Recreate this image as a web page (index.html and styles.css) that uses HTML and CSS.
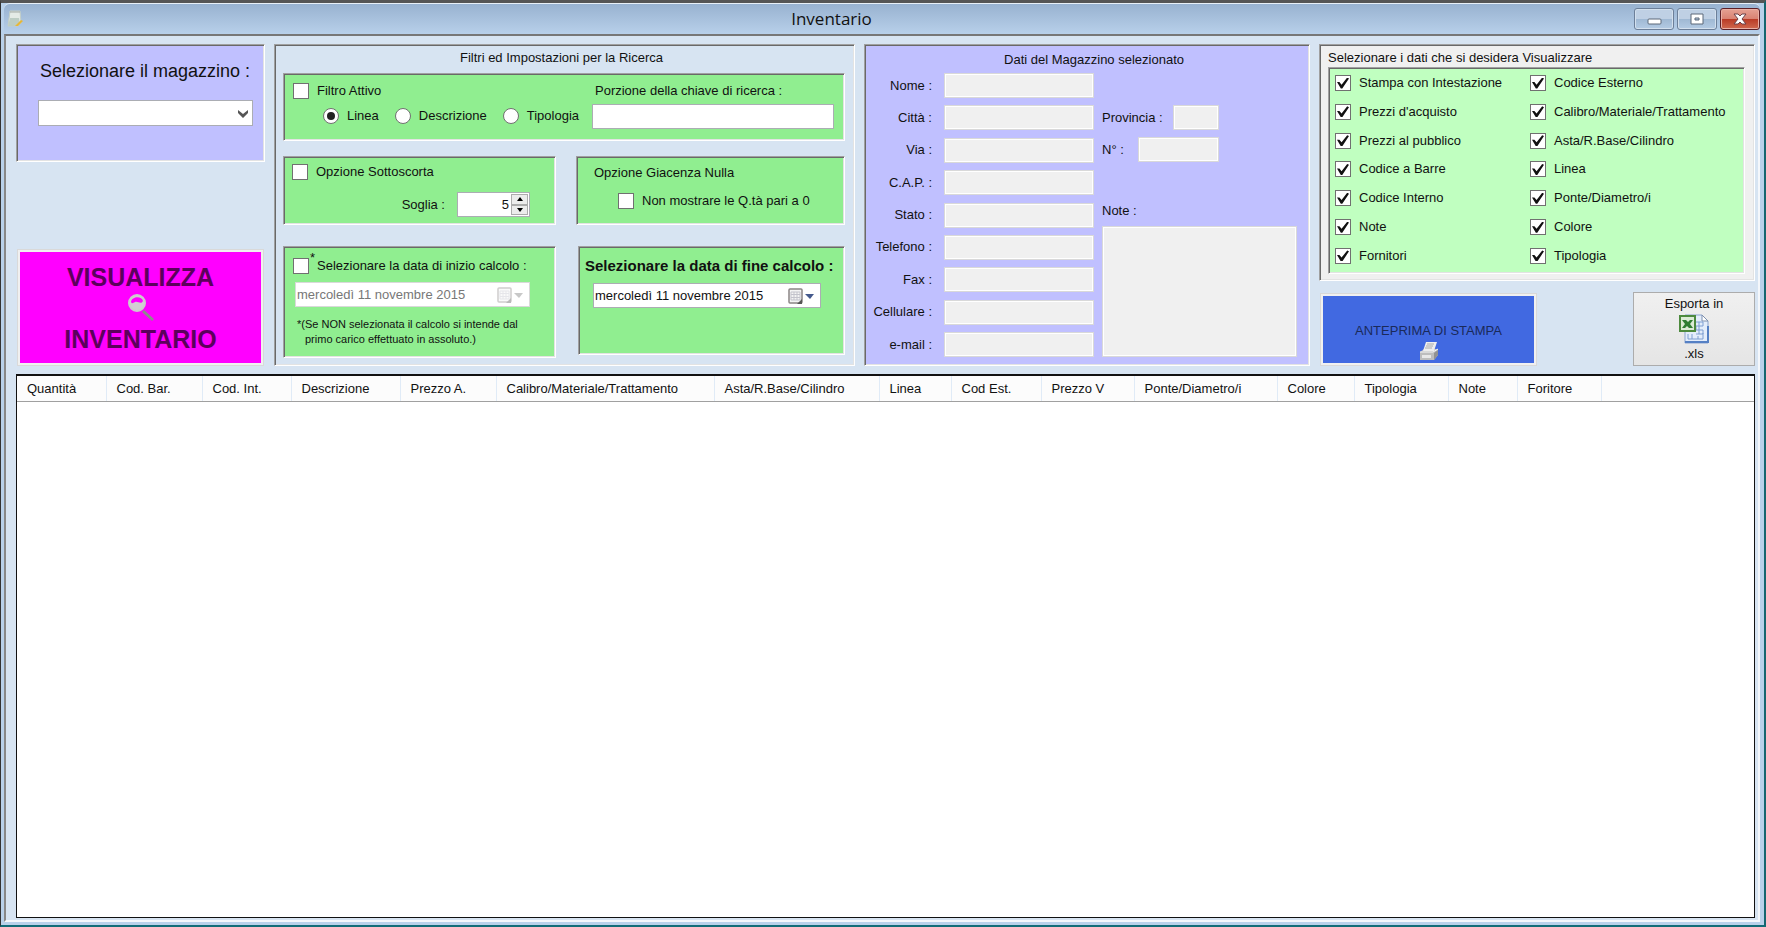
FILE: index.html
```
<!DOCTYPE html>
<html lang="it">
<head>
  <meta charset="UTF-8">
  <meta name="viewport" content="width=device-width, initial-scale=1.0">
  <title>Inventario</title>
  <link rel="stylesheet" href="styles.css">
</head>
<body>
  <div class="window">
    <header class="titlebar">
      <svg class="app-icon" width="16" height="18" viewBox="0 0 16 18">
        <path d="M3 1h10l1 12-3 3H1L2 9z" fill="#e4ebe6" stroke="#c3cfc8"/>
        <path d="M3 8h9l1 6-3 2H1z" fill="#bccdc4"/>
        <path d="M4 1v2M6 1v2M8 1v2M10 1v2M12 1v2" stroke="#a3aaa5"/>
        <path d="M8 16l6-6 2 1-5 5z" fill="#e7b736"/>
      </svg>
      <h1>Inventario</h1>
      <div class="window-buttons">
        <button type="button" aria-label="Riduci a icona">
          <svg width="16" height="16" viewBox="0 0 16 16"><rect x="2" y="8" width="13" height="5" rx="1" fill="#fff" stroke="#5c6878"/></svg>
        </button>
        <button type="button" aria-label="Ingrandisci">
          <svg width="16" height="16" viewBox="0 0 16 16"><path d="M2 3h12v10H2zM6 7v2h4V7z" fill="#fff" fill-rule="evenodd" stroke="#5c6878"/></svg>
        </button>
        <button type="button" class="close" aria-label="Chiudi">
          <svg width="16" height="16" viewBox="0 0 16 16"><path d="M2 3h4l2 2 2-2h4l-4 5 4 5h-4l-2-2-2 2H2l4-5z" fill="#fff" stroke="#6b4048"/></svg>
        </button>
      </div>
    </header>

    <main class="client">
      <div class="top">
        <div class="column">
          <section class="panel warehouse">
            <label for="magazzino">Selezionare il magazzino :</label>
            <div class="combo">
              <select id="magazzino"><option></option></select>
              <svg width="10" height="8" viewBox="0 0 10 8"><path d="M0 0l5 4 5-4v3L5 8 0 3z" fill="#555"/></svg>
            </div>
          </section>
          <button type="button" class="big-button show">
            <span>VISUALIZZA</span>
            <svg width="28" height="28" viewBox="0 0 28 28">
              <path d="M16 17l10 9" stroke="#8c8c8c" stroke-width="3"/>
              <circle cx="10" cy="9" r="8" fill="#d2cdd2" stroke="#ccc" stroke-width="2"/>
              <path d="M4 8c1-6 11-6 12-1-2 4-5 0-8 1-2 1-3 2-4 0z" fill="#f0f"/>
            </svg>
            <span>INVENTARIO</span>
          </button>
        </div>

        <section class="panel filters">
          <h2>Filtri ed Impostazioni per la Ricerca</h2>
          <div class="filter-grid">
            <div class="panel green search">
              <div class="search-by">
                <label><input type="checkbox"> Filtro Attivo</label>
                <div class="radios">
                  <label><input type="radio" name="chiave" checked> Linea</label>
                  <label><input type="radio" name="chiave"> Descrizione</label>
                  <label><input type="radio" name="chiave"> Tipologia</label>
                </div>
              </div>
              <div class="search-key">
                <label for="porzione">Porzione della chiave di ricerca :</label>
                <input type="text" id="porzione">
              </div>
            </div>

            <div class="panel green stock">
              <label><input type="checkbox"> Opzione Sottoscorta</label>
              <div class="threshold">
                <label for="soglia">Soglia :</label>
                <div class="spinner">
                  <input type="number" id="soglia" value="5">
                  <div class="spin-buttons">
                    <button type="button" aria-label="Aumenta"><svg width="6" height="4" viewBox="0 0 6 4"><path d="M0 4l3-4 3 4z"/></svg></button>
                    <button type="button" aria-label="Diminuisci"><svg width="6" height="4" viewBox="0 0 6 4"><path d="M0 0l3 4 3-4z"/></svg></button>
                  </div>
                </div>
              </div>
            </div>

            <div class="panel green zero">
              <p>Opzione Giacenza Nulla</p>
              <label><input type="checkbox"> Non mostrare le Q.tà pari a 0</label>
            </div>

            <div class="panel green start-date">
              <label><input type="checkbox"> Selezionare la data di inizio calcolo :<span class="star">*</span></label>
              <div class="date disabled">
                <input type="text" value="mercoledì 11 novembre 2015" aria-label="Data di inizio calcolo" disabled>
                <button type="button" aria-label="Apri calendario" disabled>
                  <svg width="26" height="16" viewBox="0 0 26 16">
                    <rect x="1" y="1" width="13" height="14" rx="1" fill="#f4f4f4" stroke="#8a8585" stroke-width="1.5"/>
                    <path d="M3 4h9v8H3zM3 6.500h9M3 9.500h9M6 4v8M9 4v8" fill="none" stroke="#c3c3cc"/>
                    <path d="M14 11v5h-5z" fill="#555"/>
                    <path d="M17 6h9l-4 5z" fill="#777"/>
                  </svg>
                </button>
              </div>
              <p class="hint">*(Se NON selezionata il calcolo si intende dal<br><span>primo carico effettuato in assoluto.)</span></p>
            </div>

            <div class="panel green end-date">
              <label for="fine">Selezionare la data di fine calcolo :</label>
              <div class="date">
                <input type="text" id="fine" value="mercoledì 11 novembre 2015">
                <button type="button" aria-label="Apri calendario">
                  <svg width="26" height="16" viewBox="0 0 26 16">
                    <rect x="1" y="1" width="13" height="14" rx="1" fill="#f4f4f4" stroke="#8a8585" stroke-width="1.5"/>
                    <path d="M3 4h9v8H3zM3 6.500h9M3 9.500h9M6 4v8M9 4v8" fill="none" stroke="#c3c3cc"/>
                    <path d="M14 11v5h-5z" fill="#555"/>
                    <path d="M17 6h9l-4 5z" fill="#44598c"/>
                  </svg>
                </button>
              </div>
            </div>
          </div>
        </section>

        <section class="panel details">
          <h2>Dati del Magazzino selezionato</h2>
          <div class="details-body">
            <div class="fields">
              <div class="field"><label for="nome">Nome :</label><input type="text" id="nome" disabled></div>
              <div class="field"><label for="citta">Città :</label><input type="text" id="citta" disabled></div>
              <div class="field"><label for="via">Via :</label><input type="text" id="via" disabled></div>
              <div class="field"><label for="cap">C.A.P. :</label><input type="text" id="cap" disabled></div>
              <div class="field"><label for="stato">Stato :</label><input type="text" id="stato" disabled></div>
              <div class="field"><label for="telefono">Telefono :</label><input type="text" id="telefono" disabled></div>
              <div class="field"><label for="fax">Fax :</label><input type="text" id="fax" disabled></div>
              <div class="field"><label for="cellulare">Cellulare :</label><input type="text" id="cellulare" disabled></div>
              <div class="field"><label for="email">e-mail :</label><input type="text" id="email" disabled></div>
            </div>
            <div class="extra">
              <div class="extra-field"><label for="provincia">Provincia :</label><input type="text" id="provincia" class="province" disabled></div>
              <div class="extra-field"><label for="numero">N° :</label><input type="text" id="numero" class="number" disabled></div>
              <label class="notes-label" for="note">Note :</label>
              <textarea id="note" disabled></textarea>
            </div>
          </div>
        </section>

        <div class="column">
          <section class="panel visible-data">
            <h2>Selezionare i dati che si desidera Visualizzare</h2>
            <div class="panel checks">
              <label><input type="checkbox" checked> Stampa con Intestazione</label>
              <label><input type="checkbox" checked> Codice Esterno</label>
              <label><input type="checkbox" checked> Prezzi d'acquisto</label>
              <label><input type="checkbox" checked> Calibro/Materiale/Trattamento</label>
              <label><input type="checkbox" checked> Prezzi al pubblico</label>
              <label><input type="checkbox" checked> Asta/R.Base/Cilindro</label>
              <label><input type="checkbox" checked> Codice a Barre</label>
              <label><input type="checkbox" checked> Linea</label>
              <label><input type="checkbox" checked> Codice Interno</label>
              <label><input type="checkbox" checked> Ponte/Diametro/i</label>
              <label><input type="checkbox" checked> Note</label>
              <label><input type="checkbox" checked> Colore</label>
              <label><input type="checkbox" checked> Fornitori</label>
              <label><input type="checkbox" checked> Tipologia</label>
            </div>
          </section>
          <div class="actions">
            <button type="button" class="big-button print">
              <span>ANTEPRIMA DI STAMPA</span>
              <svg width="20" height="18" viewBox="0 0 20 18">
                <path d="M1 10l4-3h14v6l-4 5H1z" fill="#bdbdbd"/>
                <path d="M7 0h11l-3 9H4z" fill="#eee"/>
                <path d="M8 2h7M7 4h7M6 6h7" stroke="#aaa"/>
                <path d="M1 10h13l5-3" stroke="#f5f5f5" fill="none"/>
                <path d="M3 13h9v3H3z" fill="#e8e8e8"/>
                <path d="M15 11l4-3v5l-4 5z" fill="#929292"/>
              </svg>
            </button>
            <button type="button" class="export">
              <span>Esporta in</span>
              <svg width="30" height="30" viewBox="0 0 30 30">
                <path d="M6 1h17l6 6v22H6z" fill="#e3edfb" stroke="#8ba4cf"/>
                <path d="M23 1v6h6z" fill="#fff" stroke="#7d8fae"/>
                <path d="M6 28h23V12" fill="none" stroke="#5580c4" stroke-width="2"/>
                <path d="M17 8h7v4h-7v4h7v4h-7M20 8v12M9 20v5h15v-6M13 20v5M19 22v3" fill="none" stroke="#7f9fd2"/>
                <rect x="1" y="2" width="15" height="15" fill="#dcebd6" stroke="#4d8a3e" stroke-width="2"/>
                <path d="M3 6h4l2 2 2-2h3l-3 4 3 4h-4l-2-2-2 2H3l3-4z" fill="#2f7d32"/>
              </svg>
              <span>.xls</span>
            </button>
          </div>
        </div>
      </div>

      <div class="list">
        <table>
          <colgroup>
            <col class="w89"><col class="w96"><col class="w89"><col class="w109"><col class="w96">
            <col class="w218"><col class="w165"><col class="w72"><col class="w90"><col class="w93">
            <col class="w143"><col class="w77"><col class="w94"><col class="w69"><col class="w84"><col>
          </colgroup>
          <thead>
            <tr>
              <th>Quantità</th>
              <th>Cod. Bar.</th>
              <th>Cod. Int.</th>
              <th>Descrizione</th>
              <th>Prezzo A.</th>
              <th>Calibro/Materiale/Trattamento</th>
              <th>Asta/R.Base/Cilindro</th>
              <th>Linea</th>
              <th>Cod Est.</th>
              <th>Prezzo V</th>
              <th>Ponte/Diametro/i</th>
              <th>Colore</th>
              <th>Tipologia</th>
              <th>Note</th>
              <th>Foritore</th>
              <th></th>
            </tr>
          </thead>
          <tbody></tbody>
        </table>
      </div>
    </main>
  </div>
</body>
</html>
```
FILE: styles.css
```
* {
  box-sizing: border-box;
}

body {
  margin: 0;
  height: 100vh;
  background: #555;
  font-family: "Liberation Sans", Arial, sans-serif;
  font-size: 13px;
  line-height: 16px;
  color: #111;
}

h1, h2, p {
  margin: 0;
  font-size: 13px;
  font-weight: normal;
}

input, select, textarea, button {
  margin: 0;
  padding: 0;
  font: inherit;
  color: inherit;
}

label {
  white-space: nowrap;
}

svg {
  display: block;
}

/* window frame */
.window {
  display: flex;
  flex-direction: column;
  height: 100vh;
  padding: 0 4px 3px 3px;
  border: 1px solid #333;
  border-top: 3px solid #555;
  border-right: 2px solid #16666f;
  border-bottom: 2px solid #126c78;
  background: #b9d1ea;
}

.titlebar {
  display: grid;
  grid-template-columns: 22px 1fr 126px;
  align-items: center;
  height: 31px;
  padding: 0 0 0 3px;
  border-top: 1px solid #e8f0f8;
  border-radius: 6px 6px 0 0;
  background: linear-gradient(#98b2d0, #b8d0ea);
}

.titlebar h1 {
  font-family: "Open Sans", "Noto Sans", sans-serif;
  font-size: 17px;
  line-height: 24px;
  text-align: center;
}

.window-buttons {
  display: flex;
  gap: 3px;
}

.window-buttons button {
  display: flex;
  flex: 1;
  align-items: center;
  justify-content: center;
  height: 22px;
  border: 1px solid #6c7f99;
  border-radius: 3px;
  background: linear-gradient(#bfd0e4 50%, #9fb8d3 50%, #b4cbe4);
  box-shadow: inset 0 0 0 1px #d3e0ee;
}

.window-buttons .close {
  border-color: #5c1f26;
  background: linear-gradient(#e5a193, #d98272 50%, #b93a25 50%, #d0694f);
  box-shadow: inset 0 0 0 1px #e9b0a5;
}

.client {
  display: flex;
  flex: 1;
  flex-direction: column;
  gap: 8px;
  min-height: 0;
  padding: 8px 3px 2px 10px;
  border: 2px solid;
  border-color: #777 #f4f7fb #f4f7fb #888;
  background: #d7e4f2;
}

/* panels */
.panel {
  border: 1px solid;
  border-color: #a0a0a0 #fff #fff #a0a0a0;
  padding: 1px;
  box-shadow: inset 1px 1px #696969, inset -1px -1px #e3e3e3;
}

.green {
  background: #90ee90;
}

.top {
  display: grid;
  grid-template-columns: 249fr 581fr 446fr 436fr;
  gap: 9px;
  min-height: 322px;
}

.column {
  display: flex;
  flex-direction: column;
  justify-content: space-between;
}

.warehouse {
  height: 118px;
  padding: 14px 11px 0 21px;
  background: #c0c0ff;
}

.warehouse > label {
  display: block;
  padding-left: 2px;
  font-size: 18px;
  line-height: 24px;
}

.combo {
  position: relative;
  margin-top: 17px;
}

.combo select {
  display: block;
  width: 100%;
  height: 26px;
  border: 1px solid #abadb3;
  border-radius: 0;
  background: #fff;
  appearance: none;
}

.combo svg {
  position: absolute;
  top: 10px;
  right: 5px;
  pointer-events: none;
}

.big-button {
  display: flex;
  flex-direction: column;
  align-items: center;
  border: 1px solid #d9d9d9;
  box-shadow: inset 0 0 0 2px #f0f0f0;
}

.show {
  justify-content: center;
  gap: 2px;
  height: 117px;
  margin: 0 1px;
  background: #f0f;
  color: #5c005c;
  font-size: 25px;
  font-weight: bold;
  line-height: 30px;
}

/* controls */
input[type="checkbox"], input[type="radio"] {
  display: inline-grid;
  flex: none;
  place-content: center;
  width: 16px;
  height: 16px;
  border: 1px solid #707070;
  background: #fff;
  appearance: none;
}

input[type="radio"] {
  border-radius: 50%;
}

input[type="checkbox"]:checked::before {
  content: "";
  width: 12px;
  height: 11px;
  background: #111;
  clip-path: polygon(0 42%, 20% 42%, 38% 65%, 85% 0, 100% 8%, 44% 100%, 32% 100%);
}

input[type="radio"]:checked::before {
  content: "";
  width: 8px;
  height: 8px;
  border-radius: 50%;
  background: #222;
}

input[type="text"], textarea {
  width: 100%;
  height: 25px;
  border: 1px solid #abadb3;
  background: #fff;
}

input[type="text"]:disabled, textarea:disabled {
  border-color: #d9d9d9;
  background: #f0f0f0;
  box-shadow: inset 0 0 0 1px #fff;
}

label:has(input) {
  display: flex;
  align-items: center;
  gap: 8px;
}

/* filters */
.filters {
  padding: 5px 9px 6px 8px;
}

.filters h2 {
  padding-right: 5px;
}

.filters h2, .details h2 {
  text-align: center;
}

.filter-grid {
  display: grid;
  grid-template-columns: 272fr 268fr;
  grid-template-rows: 68px 69px 112px;
  gap: 15px 20px;
  margin-top: 7px;
}

.search {
  display: flex;
  grid-column: 1 / -1;
  justify-content: space-between;
  padding: 9px 10px 0 9px;
}

.radios {
  display: flex;
  gap: 16px;
  margin: 9px 0 0 30px;
}

.search-key {
  width: 242px;
}

.search-key label {
  display: block;
  padding-left: 3px;
  margin-bottom: 5px;
}

.stock, .zero {
  padding: 7px 8px 0;
}

.threshold {
  display: flex;
  align-items: center;
  justify-content: flex-end;
  gap: 12px;
  margin: 12px 17px 0 0;
}

.spinner {
  display: flex;
  width: 73px;
  height: 25px;
  padding: 1px;
  border: 1px solid #abadb3;
  background: #fff;
}

.spinner input {
  flex: 1;
  min-width: 0;
  padding-right: 2px;
  border: 0;
  text-align: right;
  appearance: textfield;
}

.spinner input::-webkit-inner-spin-button {
  display: none;
}

.spin-buttons {
  display: flex;
  flex-direction: column;
  width: 17px;
}

.spin-buttons button {
  display: flex;
  flex: 1;
  align-items: center;
  justify-content: center;
  border: 1px solid #acacac;
  background: #ececec;
}

.zero p {
  padding: 1px 0 0 9px;
}

.zero label {
  margin: 12px 0 0 33px;
}

.start-date, .end-date {
  margin-top: 6px;
  height: 112px;
  padding: 11px 8px 0 9px;
}

.start-date label {
  position: relative;
}

.star {
  position: absolute;
  top: -8px;
  left: 17px;
}

.date {
  display: flex;
  align-items: center;
  height: 25px;
  margin: 8px 17px 0 2px;
  padding-right: 6px;
  border: 1px solid #abadb3;
  background: #fff;
}

.date input[type="text"], .date input[type="text"]:disabled {
  flex: 1;
  min-width: 0;
  height: 21px;
  padding-left: 1px;
  border: 0;
  background: none;
  box-shadow: none;
}

.date button {
  border: 0;
  background: none;
}

.date.disabled {
  border-color: #d9d9d9;
  color: #777;
}

.date.disabled svg {
  opacity: .4;
}

.hint {
  margin: 10px 0 0 4px;
  font-size: 11px;
  line-height: 15px;
  white-space: nowrap;
}

.hint span {
  padding-left: 8px;
}

.end-date {
  height: 109px;
  margin-left: 2px;
  padding: 11px 6px 0;
}

.end-date label {
  font-size: 15px;
  font-weight: bold;
}

.end-date .date {
  margin: 8px 17px 0 8px;
}

/* warehouse details */
.details {
  display: flex;
  flex-direction: column;
  padding: 7px 12px 8px 0;
  background: #c0c0ff;
}

.details h2 {
  padding-left: 26px;
}

.details-body {
  display: grid;
  flex: 1;
  grid-template-columns: 229fr 195fr;
  gap: 8px;
  margin-top: 5px;
}

.fields {
  display: flex;
  flex-direction: column;
  justify-content: space-between;
}

.field {
  display: grid;
  grid-template-columns: 67px 1fr;
  gap: 12px;
  align-items: center;
}

.field label {
  text-align: right;
}

.extra {
  display: flex;
  flex-direction: column;
  gap: 7px;
  padding-top: 32px;
}

.extra-field {
  display: flex;
  align-items: center;
  justify-content: space-between;
  width: 117px;
}

.extra-field .province {
  width: 46px;
}

.extra-field .number {
  width: 81px;
}

.notes-label {
  margin-top: 34px;
}

.extra textarea {
  display: block;
  flex: 1;
  resize: none;
}

/* visible data */
.visible-data {
  height: 237px;
  padding: 5px 9px 4px 8px;
  background: #f0f0f0;
}

.checks {
  display: grid;
  grid-template-columns: 195px 1fr;
  align-content: space-between;
  height: 207px;
  margin-top: 1px;
  padding: 7px 5px 9px 6px;
  background: #c0ffc0;
}

.actions {
  display: flex;
  align-items: center;
  justify-content: space-between;
}

.print {
  justify-content: flex-end;
  width: 217px;
  height: 73px;
  margin-left: 1px;
  padding-bottom: 5px;
  gap: 3px;
  background: #4169e1;
  color: #1a2a5a;
}

.export {
  display: flex;
  flex-direction: column;
  align-items: center;
  justify-content: center;
  gap: 2px;
  width: 122px;
  height: 74px;
  border: 1px solid #acacac;
  background: linear-gradient(#f0f0f0, #e5e5e5);
}

/* results */
.list {
  flex: 1;
  overflow: hidden;
  border: 2px solid #111;
  border-width: 2px 1px 1px;
  background: #fff;
}

table {
  width: 100%;
  border-collapse: collapse;
  table-layout: fixed;
}

th {
  height: 25px;
  padding: 2px 0 0 10px;
  border-right: 1px solid #e0ebf7;
  border-bottom: 1px solid #a0a0a0;
  background: #fcfcfc;
  font-weight: normal;
  text-align: left;
  white-space: nowrap;
}

th:last-child {
  border-right: 0;
}

.w69 { width: 69px; }
.w72 { width: 72px; }
.w77 { width: 77px; }
.w84 { width: 84px; }
.w89 { width: 89px; }
.w90 { width: 90px; }
.w93 { width: 93px; }
.w94 { width: 94px; }
.w96 { width: 96px; }
.w109 { width: 109px; }
.w143 { width: 143px; }
.w165 { width: 165px; }
.w218 { width: 218px; }
```
